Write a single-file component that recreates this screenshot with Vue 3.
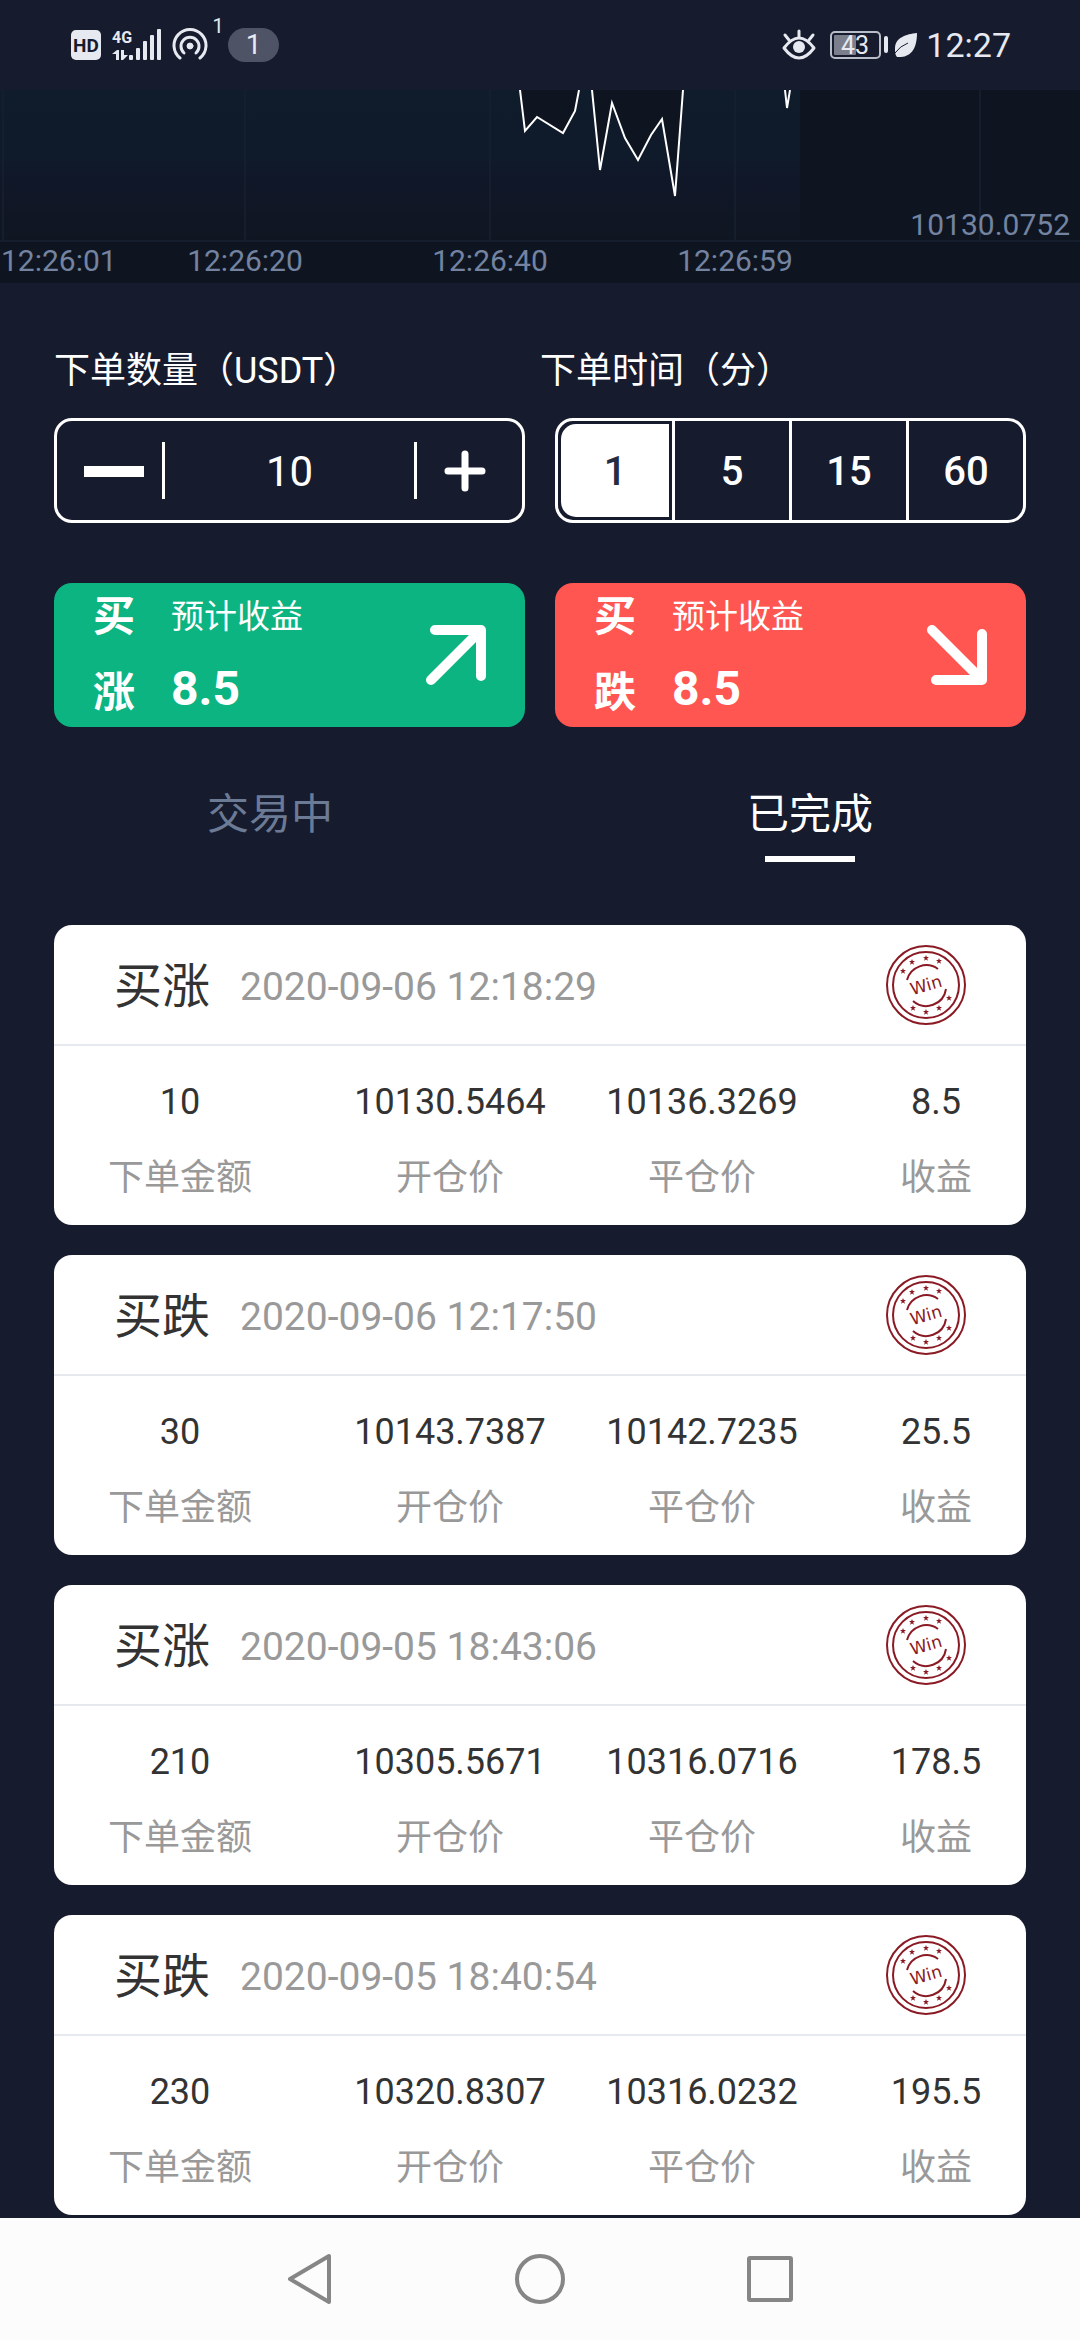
<script setup>
import { ref } from 'vue'

const amount = ref('10')
const minutes = [1, 5, 15, 60]
const minute = ref(1)
const tab = ref('done')

const step = (by) => {
  amount.value = String(Math.max(10, Number(amount.value) + by))
}

const timeMarks = [
  { x: 1, anchor: 'start', text: '12:26:01' },
  { x: 245, anchor: 'middle', text: '12:26:20' },
  { x: 490, anchor: 'middle', text: '12:26:40' },
  { x: 735, anchor: 'middle', text: '12:26:59' },
]
const gridLines = [3, 245, 490, 735, 980]

const stars = [
  [-23, -14], [-14, -23], [0, -27], [13, -24],
  [23, 13], [13, 23], [0, 27], [-13, 23],
]

const orders = [
  { side: '买涨', time: '2020-09-06 12:18:29', amount: '10', open: '10130.5464', close: '10136.3269', profit: '8.5' },
  { side: '买跌', time: '2020-09-06 12:17:50', amount: '30', open: '10143.7387', close: '10142.7235', profit: '25.5' },
  { side: '买涨', time: '2020-09-05 18:43:06', amount: '210', open: '10305.5671', close: '10316.0716', profit: '178.5' },
  { side: '买跌', time: '2020-09-05 18:40:54', amount: '230', open: '10320.8307', close: '10316.0232', profit: '195.5' },
]
</script>

<template>
  <div class="page">
    <header class="status">
      <div class="status-side">
        <svg class="icon-hd" width="30" height="30" viewBox="0 0 30 30" aria-hidden="true">
          <rect width="30" height="30" rx="5" fill="#e6e9f0" />
          <text x="15" y="22" text-anchor="middle" font-size="19" font-weight="700" fill="#161b2e">HD</text>
        </svg>
        <svg class="icon-signal" width="50" height="40" viewBox="0 -4 50 40" fill="#e6e9f0" aria-hidden="true">
          <text x="0" y="14" font-size="16" font-weight="700">4G</text>
          <path d="M0 25 L5 21 H7 V31 H4 V25 Z M9 21 H12 V26 L16 26 L11 31 H9 Z" />
          <rect x="17" y="26" width="4" height="5" rx="1" />
          <rect x="24" y="19" width="4" height="12" rx="1" />
          <rect x="31" y="12" width="4" height="19" rx="1" />
          <rect x="38" y="6" width="4" height="25" rx="1" />
          <rect x="45" y="0" width="4" height="31" rx="1" />
        </svg>
        <svg class="icon-hotspot" width="36" height="34" viewBox="0 0 36 34" fill="none" stroke="#e6e9f0" stroke-width="3" stroke-linecap="round" aria-hidden="true">
          <path d="M8 30 A16 16 0 1 1 28 30" />
          <path d="M12 25 A9 9 0 1 1 24 25" />
          <circle cx="18" cy="18" r="3" fill="#e6e9f0" stroke-width="1" />
        </svg>
        <span class="sup">1</span>
        <span class="pill">1</span>
      </div>
      <div class="status-side">
        <svg class="icon-eye" width="34" height="32" viewBox="0 0 34 32" fill="none" stroke="#e6e9f0" stroke-width="3" stroke-linecap="round" aria-hidden="true">
          <path d="M2 19 Q17 -1 32 19 Q17 39 2 19 Z" stroke-linejoin="round" />
          <path d="M17 2 V8 M3 6 L7 11 M31 6 L27 11" />
          <circle cx="17" cy="18" r="6" fill="#e6e9f0" stroke="none" />
        </svg>
        <svg class="icon-battery" width="59" height="28" viewBox="0 0 59 28" aria-hidden="true">
          <rect x="1" y="1" width="49" height="26" rx="4" fill="none" stroke="#b9bdc8" stroke-width="2" />
          <rect x="4" y="4" width="22" height="20" rx="1" fill="#7b7f8c" />
          <rect x="54" y="5" width="4" height="17" rx="2" fill="#e6e9f0" />
          <text x="25" y="23" text-anchor="middle" font-size="25" fill="#e6e9f0">43</text>
        </svg>
        <svg class="icon-leaf" width="24" height="26" viewBox="0 0 24 26" aria-hidden="true">
          <path d="M23 1 C12 2 1 6 1 16 C1 20 1 23 3 25 C14 26 23 20 23 1 Z" fill="#e6e9f0" />
          <path d="M1 21 Q6 14 14 11" fill="none" stroke="#161b2e" stroke-width="1" />
        </svg>
        <time class="clock">12:27</time>
      </div>
    </header>

    <main class="content">
      <svg class="chart" viewBox="0 0 1080 193" role="img" aria-label="10130.0752">
        <defs>
          <linearGradient id="area" x1="0" y1="0" x2="0" y2="1">
            <stop offset="0" stop-color="#0f1c2c" />
            <stop offset="45%" stop-color="#0f1a2a" />
            <stop offset="60%" stop-color="#101728" />
            <stop offset="1" stop-color="#101621" />
          </linearGradient>
        </defs>
        <rect width="1080" height="193" fill="#0e1521" />
        <path
          fill="url(#area)"
          d="M0 0 H520 L525 41 L537 27 L563 43 L575 21 L579 0 H592 L600 80 L612 13 L625 48 L638 70 L651 45 L662 29 L675 106 L683 0 H785 L787 18 L790 0 H800 V151 H0 Z"
        />
        <g stroke="#151e2c" stroke-width="2">
          <line v-for="x in gridLines" :key="x" :x1="x" :x2="x" y1="0" y2="151" />
          <line x1="0" x2="1080" y1="151" y2="151" />
        </g>
        <path
          fill="none"
          stroke="#ffffff"
          stroke-width="2"
          d="M520 0 L525 41 L537 27 L563 43 L575 21 L579 0 M592 0 L600 80 L612 13 L625 48 L638 70 L651 45 L662 29 L675 106 L683 0 M785 0 L787 18 L790 0"
        />
        <g fill="#7383a0" font-size="30">
          <text v-for="m in timeMarks" :key="m.text" :x="m.x" y="181" :text-anchor="m.anchor">{{ m.text }}</text>
          <text x="1070" y="145" text-anchor="end">10130.0752</text>
        </g>
      </svg>

      <section class="order">
        <div class="captions">
          <label for="amount">下单数量（USDT）</label>
          <span id="minutes-label">下单时间（分）</span>
        </div>
        <div class="pair">
          <div class="stepper">
            <button class="step minus" type="button" aria-label="减少" @click="step(-10)">
              <svg width="60" height="12" viewBox="0 0 60 12"><rect y="1" width="60" height="11" fill="#fff" /></svg>
            </button>
            <input id="amount" v-model="amount" type="text" inputmode="numeric" />
            <button class="step plus" type="button" aria-label="增加" @click="step(10)">
              <svg width="42" height="42" viewBox="0 0 42 42" stroke="#fff" stroke-width="7" stroke-linecap="round">
                <path d="M21 4 V38 M4 21 H38" />
              </svg>
            </button>
          </div>
          <div class="minutes" role="radiogroup" aria-labelledby="minutes-label">
            <label v-for="m in minutes" :key="m" :class="{ on: minute === m }">
              <input v-model="minute" type="radio" name="minutes" :value="m" />
              <span>{{ m }}</span>
            </label>
          </div>
        </div>
        <div class="pair">
          <button class="buy up" type="button">
            <span class="side"><span>买</span><span>涨</span></span>
            <span class="gain"><span>预计收益</span><strong>8.5</strong></span>
            <svg width="60" height="60" viewBox="0 0 60 60"><path d="M5 55 L55 5 M9 5 H55 V51" /></svg>
          </button>
          <button class="buy down" type="button">
            <span class="side"><span>买</span><span>跌</span></span>
            <span class="gain"><span>预计收益</span><strong>8.5</strong></span>
            <svg width="60" height="60" viewBox="0 0 60 60"><path d="M5 5 L55 55 M55 9 V55 H9" /></svg>
          </button>
        </div>
      </section>

      <div class="tabs" role="tablist">
        <button type="button" role="tab" :class="{ on: tab === 'open' }" :aria-selected="tab === 'open'" @click="tab = 'open'">交易中</button>
        <button type="button" role="tab" :class="{ on: tab === 'done' }" :aria-selected="tab === 'done'" @click="tab = 'done'">已完成</button>
      </div>

      <section class="orders">
        <article v-for="o in orders" :key="o.time" class="card">
          <header class="card-head">
            <h2>{{ o.side }}</h2>
            <time>{{ o.time }}</time>
            <svg class="stamp" width="80" height="80" viewBox="-40 -40 80 80" aria-hidden="true">
              <g fill="none" stroke="#8a1a24" stroke-width="2">
                <circle r="39" />
                <circle r="33" />
                <path d="M-19 -5 A20 20 0 0 1 12 -16" />
                <path d="M20 4 A20 20 0 0 1 -13 16" />
              </g>
              <g fill="#8a1a24">
                <path
                  v-for="(s, i) in stars"
                  :key="i"
                  :transform="`translate(${s[0]} ${s[1]})`"
                  d="M0 -3 L.8 -1 L3 -1 L1.2 .5 L2 2.7 L0 1.4 L-2 2.7 L-1.2 .5 L-3 -1 L-.8 -1 Z"
                />
                <text class="stamp-text" transform="rotate(-16)" y="6" text-anchor="middle" font-size="17">Win</text>
              </g>
            </svg>
          </header>
          <dl class="metrics">
            <div class="first"><dt>下单金额</dt><dd>{{ o.amount }}</dd></div>
            <div><dt>开仓价</dt><dd>{{ o.open }}</dd></div>
            <div><dt>平仓价</dt><dd>{{ o.close }}</dd></div>
            <div class="last"><dt>收益</dt><dd>{{ o.profit }}</dd></div>
          </dl>
        </article>
      </section>
    </main>

    <nav class="navbar">
      <button type="button" aria-label="返回">
        <svg width="50" height="54" viewBox="0 0 50 54"><path d="M5 27 L44 4 V50 Z" /></svg>
      </button>
      <button type="button" aria-label="主页">
        <svg width="50" height="54" viewBox="0 0 50 54"><circle cx="25" cy="27" r="23" /></svg>
      </button>
      <button type="button" aria-label="最近任务">
        <svg width="50" height="54" viewBox="0 0 50 54"><rect x="4" y="6" width="42" height="42" rx="1" /></svg>
      </button>
    </nav>
  </div>
</template>

<style>
body {
  background: #161b2e;
}
</style>

<style scoped>
.page {
  min-height: 100vh;
  display: flex;
  flex-direction: column;
  background: #161b2e;
  color: #fff;
  font-family: Roboto, "Noto Sans CJK SC", sans-serif;
}

button,
input {
  margin: 0;
  padding: 0;
  border: 0;
  background: none;
  color: inherit;
  font-family: inherit;
}

svg {
  display: block;
  flex: none;
}

.status {
  height: 90px;
  padding: 0 69px 0 71px;
  display: flex;
  justify-content: space-between;
  align-items: center;
  color: #e6e9f0;
}

.status-side {
  height: 54px;
  display: flex;
  align-items: center;
}

.icon-signal {
  margin-left: 11px;
}

.icon-hotspot {
  margin-left: 10px;
}

.sup {
  align-self: flex-start;
  width: 20px;
  font-size: 20px;
  line-height: 16px;
  text-align: center;
}

.pill {
  width: 51px;
  border-radius: 17px;
  background: #4e5365;
  font-size: 28px;
  line-height: 34px;
  text-align: center;
}

.icon-battery {
  margin-left: 14px;
}

.icon-leaf {
  margin: 0 8px 0 5px;
}

.clock {
  font-size: 34px;
  line-height: 40px;
}

.content {
  flex: 1;
}

.chart {
  width: 100%;
  height: auto;
}

.order {
  padding: 62px 54px 0;
}

.captions {
  display: flex;
  font-size: 36px;
  line-height: 52px;
}

.captions > * {
  flex: 1;
}

.pair {
  display: flex;
  gap: 30px;
}

.captions + .pair {
  margin: 21px 0 60px;
}

.stepper,
.minutes {
  flex: 1;
  min-width: 0;
  height: 105px;
  box-sizing: border-box;
  display: flex;
  align-items: center;
  border: 3px solid #fff;
  border-radius: 18px;
}

.step {
  width: 108px;
  height: 57px;
  box-sizing: border-box;
  display: flex;
  align-items: center;
  justify-content: center;
}

.minus {
  padding-left: 9px;
  border-right: 3px solid #fff;
}

.plus {
  padding-right: 9px;
  border-left: 3px solid #fff;
}

.stepper input {
  flex: 1;
  width: 0;
  min-width: 0;
  padding-top: 2px;
  font-size: 42px;
  line-height: 57px;
  text-align: center;
}

.minutes {
  align-items: stretch;
}

.minutes label {
  flex: 1;
  display: flex;
  padding: 3px;
  border-right: 3px solid #fff;
  font-size: 40px;
  font-weight: 500;
}

.minutes label:last-child {
  border-right: 0;
}

.minutes input {
  appearance: none;
  position: absolute;
}

.minutes span {
  flex: 1;
  display: flex;
  align-items: center;
  justify-content: center;
  padding-top: 2px;
}

.minutes .on span {
  background: #fff;
  color: #262b40;
}

.minutes label:first-child span {
  border-radius: 15px 0 0 15px;
}

.buy {
  flex: 1;
  height: 144px;
  padding: 0 39px;
  display: flex;
  align-items: center;
  border-radius: 18px;
  text-align: left;
}

.up {
  background: #0cb482;
}

.down {
  background: #ff5652;
}

.side,
.gain {
  display: flex;
  flex-direction: column;
}

.side {
  gap: 26px;
  margin-right: 36px;
  font-size: 42px;
  line-height: 50px;
  font-weight: 700;
}

.gain {
  flex: 1;
  gap: 22px;
  padding-bottom: 4px;
  font-size: 33px;
  line-height: 50px;
}

.gain strong {
  font-size: 48px;
}

.buy svg {
  fill: none;
  stroke: #fff;
  stroke-width: 10;
  stroke-linecap: round;
  stroke-linejoin: round;
}

.tabs {
  display: flex;
  margin-top: 57px;
}

.tabs button {
  flex: 1;
  display: flex;
  flex-direction: column;
  align-items: center;
  gap: 10px;
  font-size: 42px;
  line-height: 62px;
  color: #6b7a95;
}

.tabs button::after {
  content: "";
  width: 90px;
  height: 6px;
}

.tabs .on {
  color: #fff;
}

.tabs .on::after {
  background: #fff;
}

.orders {
  display: flex;
  flex-direction: column;
  gap: 30px;
  padding: 63px 54px 3px;
}

.card {
  border-radius: 18px;
  background: #fff;
  color: #333;
}

.card-head {
  height: 119px;
  padding: 0 60px;
  display: flex;
  align-items: center;
  border-bottom: 2px solid #e6eaef;
}

.card-head h2 {
  margin: 0 30px 0 0;
  padding-top: 4px;
  font-size: 48px;
  line-height: 60px;
  font-weight: 400;
}

.card-head time {
  flex: 1;
  padding-top: 4px;
  font-size: 39px;
  line-height: 60px;
  color: #999;
}

.stamp-text {
  font-family: "DejaVu Sans", sans-serif;
}

.metrics {
  margin: 0;
  padding: 31px 54px 22px;
  display: grid;
  grid-template-columns: 186fr 192fr 192fr 114fr;
  column-gap: 60px;
  font-size: 36px;
  line-height: 50px;
}

.metrics div {
  display: flex;
  flex-direction: column-reverse;
  align-items: center;
  gap: 26px;
  white-space: nowrap;
}

.metrics .first {
  width: 4em;
}

.metrics .last {
  width: 2em;
  justify-self: end;
}

.metrics dt {
  color: #999;
}

.metrics dd {
  margin: 0;
}

.navbar {
  position: sticky;
  bottom: 0;
  height: 122px;
  padding: 0 195px;
  display: flex;
  background: #fcfcfc;
}

.navbar button {
  flex: 1;
  display: flex;
  align-items: center;
  justify-content: center;
}

.navbar svg {
  fill: none;
  stroke: #868686;
  stroke-width: 4;
  stroke-linejoin: round;
}
</style>
